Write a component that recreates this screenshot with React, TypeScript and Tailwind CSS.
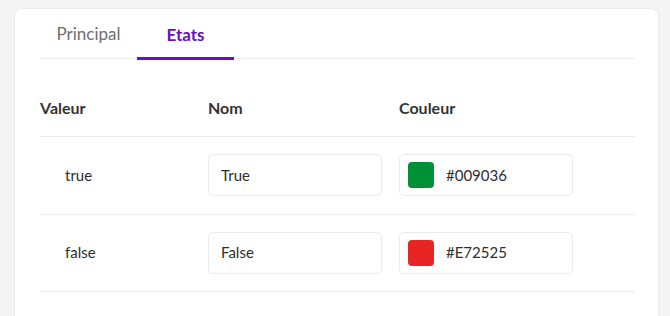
import React from "react";

const rows = [
  { value: "true", name: "True", color: "#009036", swatch: "bg-[#009036]" },
  { value: "false", name: "False", color: "#E72525", swatch: "bg-[#e72525]" },
];

export default function App() {
  return (
    <div className="w-[670px] h-[316px] overflow-hidden bg-[#f4f4f4] pt-[8px] pl-[14px] font-['Lato','Noto_Sans',sans-serif]">
      <div className="w-[645px] h-[330px] bg-white rounded-[8px] border border-[#ebebeb] pl-[25px] pr-[23px]">
        <div className="flex border-b border-[#ebebeb] h-[50px]">
          <div className="w-[97px] h-[50px] flex items-center justify-center text-[17px] text-[#6f6f6f]">
            Principal
          </div>
          <div className="w-[97px] h-[51px] flex items-center justify-center text-[17px] font-bold text-[#6a0fc4] border-b-[3px] border-[#6a0fc4] pt-[3px]">
            Etats
          </div>
        </div>
        <div className="grid grid-cols-[168px_191px_1fr] pt-[39px] pb-[18px] border-b border-[#ebebeb] text-[16px] leading-[20px] font-bold text-[#333333]">
          <div>Valeur</div>
          <div>Nom</div>
          <div>Couleur</div>
        </div>
        {rows.map((r) => (
          <div
            key={r.value}
            className="grid grid-cols-[168px_191px_1fr] items-center pt-[17px] pb-[17.5px] border-b border-[#ebebeb] text-[15px] text-[#2e2e2e]"
          >
            <div className="pl-[25px]">{r.value}</div>
            <div className="w-[174px] h-[42px] border border-[#ebebeb] rounded-[5px] flex items-center pl-[12px]">
              {r.name}
            </div>
            <div className="w-[174px] h-[42px] border border-[#ebebeb] rounded-[5px] flex items-center pl-[8px]">
              <div className={`w-[26px] h-[26px] rounded-[4px] ${r.swatch}`} />
              <span className="ml-[12px]">{r.color}</span>
            </div>
          </div>
        ))}
      </div>
    </div>
  );
}
